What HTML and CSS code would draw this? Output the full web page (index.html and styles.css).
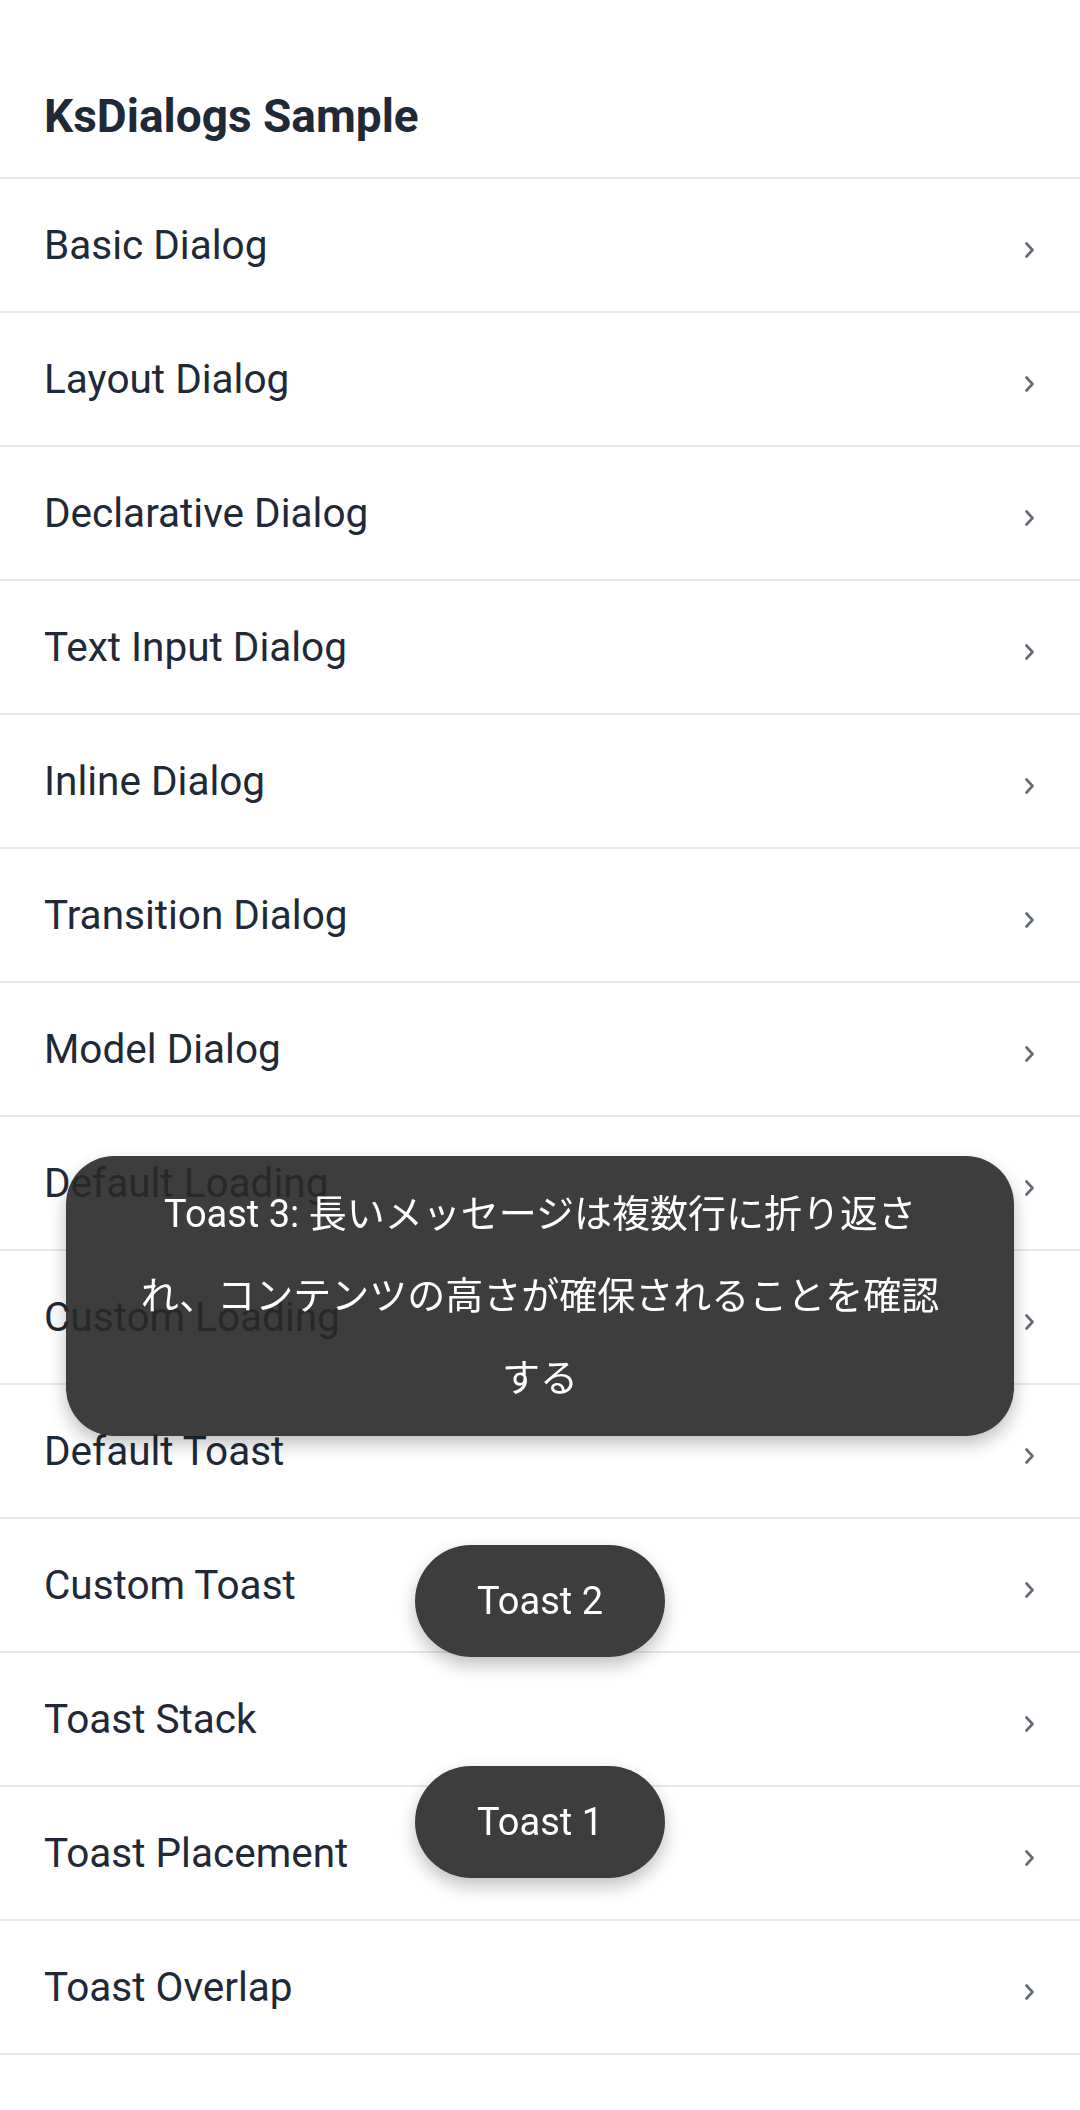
FILE: index.html
```html
<!DOCTYPE html>
<html lang="ja">
<head>
    <meta charset="UTF-8">
    <meta name="viewport" content="width=device-width, initial-scale=1.0">
    <title>KsDialogs Sample</title>
    <link rel="stylesheet" href="styles.css">
</head>
<body>
    <div class="screen">
        <!-- Cabecera -->
        <header class="app-header">
            <h1 class="app-title">KsDialogs Sample</h1>
        </header>

        <!-- Lista de ejemplos -->
        <ul class="sample-list">
            <li class="sample-item"><span>Basic Dialog</span><svg class="chevron" viewBox="0 0 9 16"><polyline points="1.5,1.5 7.5,8 1.5,14.5"/></svg></li>
            <li class="sample-item"><span>Layout Dialog</span><svg class="chevron" viewBox="0 0 9 16"><polyline points="1.5,1.5 7.5,8 1.5,14.5"/></svg></li>
            <li class="sample-item"><span>Declarative Dialog</span><svg class="chevron" viewBox="0 0 9 16"><polyline points="1.5,1.5 7.5,8 1.5,14.5"/></svg></li>
            <li class="sample-item"><span>Text Input Dialog</span><svg class="chevron" viewBox="0 0 9 16"><polyline points="1.5,1.5 7.5,8 1.5,14.5"/></svg></li>
            <li class="sample-item"><span>Inline Dialog</span><svg class="chevron" viewBox="0 0 9 16"><polyline points="1.5,1.5 7.5,8 1.5,14.5"/></svg></li>
            <li class="sample-item"><span>Transition Dialog</span><svg class="chevron" viewBox="0 0 9 16"><polyline points="1.5,1.5 7.5,8 1.5,14.5"/></svg></li>
            <li class="sample-item"><span>Model Dialog</span><svg class="chevron" viewBox="0 0 9 16"><polyline points="1.5,1.5 7.5,8 1.5,14.5"/></svg></li>
            <li class="sample-item"><span>Default Loading</span><svg class="chevron" viewBox="0 0 9 16"><polyline points="1.5,1.5 7.5,8 1.5,14.5"/></svg></li>
            <li class="sample-item"><span>Custom Loading</span><svg class="chevron" viewBox="0 0 9 16"><polyline points="1.5,1.5 7.5,8 1.5,14.5"/></svg></li>
            <li class="sample-item"><span>Default Toast</span><svg class="chevron" viewBox="0 0 9 16"><polyline points="1.5,1.5 7.5,8 1.5,14.5"/></svg></li>
            <li class="sample-item"><span>Custom Toast</span><svg class="chevron" viewBox="0 0 9 16"><polyline points="1.5,1.5 7.5,8 1.5,14.5"/></svg></li>
            <li class="sample-item"><span>Toast Stack</span><svg class="chevron" viewBox="0 0 9 16"><polyline points="1.5,1.5 7.5,8 1.5,14.5"/></svg></li>
            <li class="sample-item"><span>Toast Placement</span><svg class="chevron" viewBox="0 0 9 16"><polyline points="1.5,1.5 7.5,8 1.5,14.5"/></svg></li>
            <li class="sample-item"><span>Toast Overlap</span><svg class="chevron" viewBox="0 0 9 16"><polyline points="1.5,1.5 7.5,8 1.5,14.5"/></svg></li>
        </ul>
    </div>

    <!-- Toasts apilados -->
    <div class="toast-stack">
        <div class="toast toast-long">Toast 3: 長いメッセージは複数行に折り返さ<br>れ、コンテンツの高さが確保されることを確認<br>する</div>
        <div class="toast">Toast 2</div>
        <div class="toast">Toast 1</div>
    </div>
</body>
</html>
```

FILE: styles.css
```css
body {
    margin: 0;
    background: white;
    font-family: Roboto, "Noto Sans CJK JP", sans-serif;
    color: #1f2937;
}

.screen {
    min-height: 2110px;
}

.app-header {
    padding: 88px 44px 33px;
    border-bottom: 2px solid #e6e6ec;
}

.app-title {
    margin: 0;
    font-size: 46px;
    line-height: 56px;
    font-weight: 700;
    color: #1f2937;
}

.sample-list {
    list-style: none;
    margin: 0;
    padding: 0;
}

.sample-item {
    display: flex;
    align-items: center;
    justify-content: space-between;
    height: 132px;
    padding: 0 46px 0 44px;
    border-bottom: 2px solid #e6e6ec;
    font-size: 40.5px;
    color: #1f2937;
}

.chevron {
    width: 9px;
    height: 16px;
    margin-top: 10px;
    fill: none;
    stroke: #636a78;
    stroke-width: 2.6;
    stroke-linecap: round;
    stroke-linejoin: round;
}

.toast-stack {
    position: fixed;
    left: 0;
    right: 0;
    bottom: 232px;
    display: flex;
    flex-direction: column;
    align-items: center;
    gap: 109px;
    padding: 0 66px;
}

.toast {
    padding: 15px 62px;
    background: rgba(40, 40, 40, 0.9);
    color: white;
    font-size: 38px;
    line-height: 82px;
    text-align: center;
    border-radius: 56px;
    box-shadow: 0 8px 18px rgba(0,0,0,0.25);
}

.toast-long {
    align-self: stretch;
    padding: 17px 20px;
    border-radius: 48px;
}
```
